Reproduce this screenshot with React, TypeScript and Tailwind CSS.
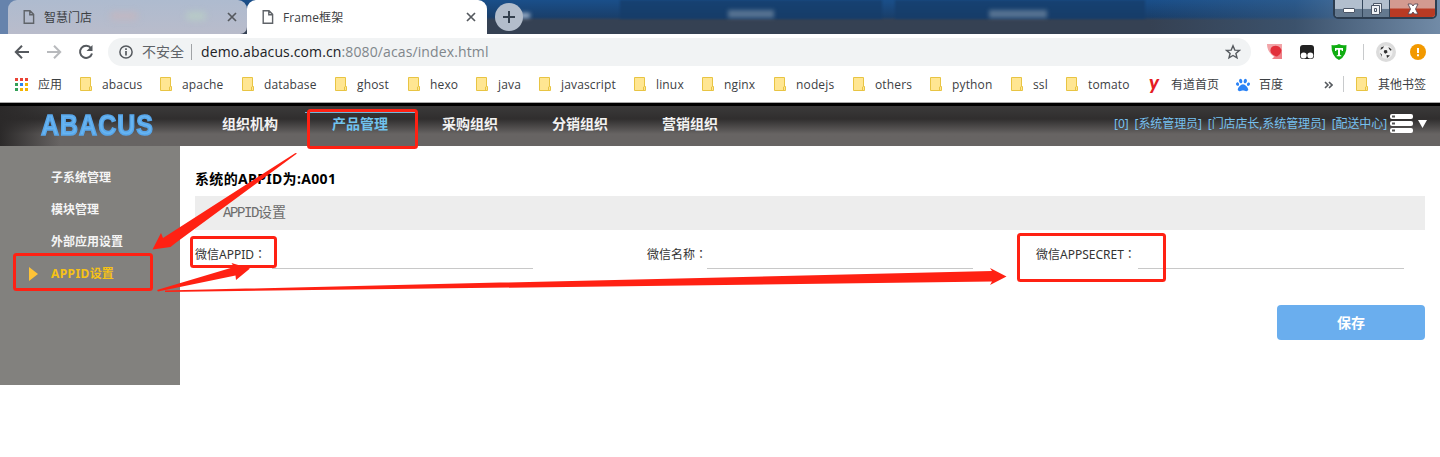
import React from "react";
import { FaPaw } from "react-icons/fa";

const UI = "font-['Open_Sans','Noto_Sans_CJK_SC',sans-serif]";

function PageIcon() {
  return (
    <svg width="12" height="14" viewBox="0 0 12 14" fill="none" stroke="#5f6368" strokeWidth="1.4" className="shrink-0">
      <path d="M1.2 .8H7L10.6 4.4V13.2H1.2Z M6.8 1V4.7H10.4" />
    </svg>
  );
}

function TabClose() {
  return (
    <svg width="10" height="10" viewBox="0 0 10 10" stroke="#55595e" strokeWidth="1.7" className="shrink-0">
      <path d="M1 1L9 9M9 1L1 9" />
    </svg>
  );
}

function Folder() {
  return (
    <svg width="13" height="15" viewBox="0 0 13 15" className="shrink-0">
      <path d="M.5 .5H10.5V9.500H11.500V13.500H.5Z" fill="#ffe692" stroke="#e8c443" />
      <path d="M9.500 13.500V10L10.500 9.500" fill="none" stroke="#e8c443" />
    </svg>
  );
}

function TabStrip() {
  return (
    <div className="relative h-[34px] w-full bg-linear-to-b from-[#1a4f8a] from-0% via-[#193f6b] via-50% to-[#354153] to-60% overflow-hidden">
      <div className="absolute left-0 top-0 h-[34px] w-[30px] bg-[#6683ac]" />
      <div className="absolute right-0 top-0 h-[34px] w-[290px] bg-linear-to-r from-transparent via-[#456b91]/40 to-[#7893b0]/90" />
      <div className="absolute left-[620px] top-0 h-[19px] w-[262px] bg-[#153c68]/70 blur-[1px]" />
      <div className="absolute left-[895px] top-0 h-[19px] w-[250px] bg-[#153c68]/70 blur-[1px]" />
      <div className="absolute left-[728px] top-[10px] h-[8px] w-[46px] bg-[#8296ab]/60 blur-[2px]" />
      <div className="absolute left-[989px] top-[10px] h-[8px] w-[58px] bg-[#8296ab]/60 blur-[2px]" />
      <div className="absolute left-[515px] top-[13px] h-[5px] w-[15px] bg-[#c3d0e0]/80 blur-[2px]" />
      <div className="relative flex h-full">
        <div className="relative ml-[8px] flex h-[34px] w-[239px] items-center rounded-t-[9px] rounded-br-[7px] bg-linear-to-b from-[#aebbcf] to-[#b9bccb] pl-[15px] pr-[10px]">
          <div className="absolute left-[178px] top-[12px] h-[8px] w-[20px] rounded-full bg-[#b9cfc6]/80 blur-[3px]" />
          <div className="absolute left-[102px] top-[12px] h-[8px] w-[28px] rounded-full bg-[#c4b6bf]/80 blur-[3px]" />
          <PageIcon />
          <span className="ml-[9px] grow pt-px text-[12px] leading-none text-[#3c4043]">智慧门店</span>
          <TabClose />
        </div>
        <div className="relative flex h-[34px] w-[240px] items-center rounded-t-[9px] bg-white pl-[15px] pr-[11px]">
          <PageIcon />
          <span className="ml-[9px] grow pt-px text-[12px] leading-none tracking-[0.1px] text-[#3c4043]">Frame框架</span>
          <TabClose />
        </div>
        <div className="ml-[8px] mt-[3px] flex size-[28px] items-center justify-center rounded-full bg-[#b3bdcb]">
          <svg width="14" height="14" viewBox="0 0 14 14" stroke="#34404e" strokeWidth="2">
            <path d="M7 1V13M1 7H13" />
          </svg>
        </div>
      </div>
      <div className="absolute right-[3px] top-[-4px] flex h-[23px] w-[104px] overflow-hidden rounded-b-[5px] border-2 border-[#2c3d50] ring-1 ring-inset ring-white/60">
        <div className="flex w-[28px] items-end justify-center border-r border-[#33465b] bg-linear-to-b from-[#b2bfce] from-55% to-[#64798f] to-60% pb-[4px]">
          <div className="h-[5px] w-[12px] rounded-[1px] border border-[#4b5667] bg-white" />
        </div>
        <div className="flex w-[27px] items-center justify-center border-r border-[#33465b] bg-linear-to-b from-[#b2bfce] from-55% to-[#64798f] to-60% pt-[3px]">
          <svg width="13" height="13" viewBox="0 0 13 13" fill="#eef1f5" stroke="#4b5667">
            <path d="M3.5 .5H11.5V9.5H3.5Z" />
            <path d="M1.5 2.5H9.5V11.5H1.5Z M4.5 5.5H6.5V8.5H4.5Z" fillRule="evenodd" />
          </svg>
        </div>
        <div className="flex grow items-center justify-center bg-linear-to-b from-[#d39a90] from-50% to-[#b83a24] to-60% pt-[3px]">
          <svg width="14" height="12" viewBox="0 0 14 12">
            <path d="M2 1H5.500L7 3L8.500 1H12L9.500 6L12 11H8.500L7 9L5.500 11H2L4.500 6Z" fill="#fff" stroke="#5a4a58" strokeWidth=".9" />
          </svg>
        </div>
      </div>
    </div>
  );
}

function Toolbar() {
  return (
    <div className="flex h-[36px] items-center bg-white pl-[14px]">
      <svg width="16" height="14" viewBox="0 0 16 14" fill="none" stroke="#55595e" strokeWidth="2">
        <path d="M15 7H2M8 .8L1.8 7L8 13.2" />
      </svg>
      <svg width="16" height="14" viewBox="0 0 16 14" fill="none" stroke="#b8babd" strokeWidth="2" className="ml-[16px]">
        <path d="M1 7H14M8 .8L14.2 7L8 13.2" />
      </svg>
      <svg width="16" height="16" viewBox="0 0 16 16" fill="none" stroke="#55595e" strokeWidth="2" className="ml-[16px]">
        <path d="M13 4.1A6.1 6.1 0 1 0 14 9.5" />
        <path d="M14.5 1V7H8.5Z" fill="#55595e" stroke="none" />
      </svg>
      <div className="ml-[14px] flex h-[28px] w-[1143px] items-center rounded-full bg-[#f1f3f4] pl-[11px] pr-[10px]">
        <svg width="14" height="14" viewBox="0 0 14 14" fill="none" stroke="#55595e" strokeWidth="1.5">
          <circle cx="7" cy="7" r="6.1" />
          <path d="M7 6V10.4M7 3.3V4.9" strokeWidth="1.7" />
        </svg>
        <span className="ml-[9px] w-[43px] whitespace-nowrap text-[14px] leading-none text-[#5f6368]">不安全</span>
        <div className="ml-[6px] h-[16px] w-px bg-[#a0a3a6]" />
        <span className="ml-[9px] grow whitespace-nowrap text-[14px] leading-none tracking-[0.12px] text-[#202124]">
          demo.abacus.com.cn<span className="text-[#80868b]">:8080/acas/index.html</span>
        </span>
        <svg width="16" height="16" viewBox="0 0 16 16" fill="none" stroke="#55595e" strokeWidth="1.4">
          <path d="M8 1.8L9.8 6.1L14.4 6.4L10.9 9.4L12 13.9L8 11.5L4 13.9L5.1 9.4L1.6 6.4L6.2 6.1Z" />
        </svg>
      </div>
      <svg width="16" height="16" viewBox="0 0 16 16" className="ml-[16px]">
        <path d="M0 0H15V15A15 15 0 0 1 0 0" fill="#f2a4a8" />
        <path d="M15 5V15H5Z" fill="#ee7f86" />
        <path d="M4 4C6 1 12 1 14 5C15 8 13 11 10 12.500C6 12 2 9 4 4Z" fill="#e22f3a" />
      </svg>
      <svg width="16" height="16" viewBox="0 0 16 16" className="ml-[16px]">
        <rect x="1" y="1" width="14" height="14" rx="3" fill="#222" />
        <circle cx="4.7" cy="11.5" r="3" fill="#fff" />
        <circle cx="11.3" cy="11.5" r="3" fill="#fff" />
      </svg>
      <svg width="16" height="16" viewBox="0 0 16 16" className="ml-[16px]">
        <path d="M8 0Q11 2 15.5 1Q16 12 8 16Q0 12 .5 1Q5 2 8 0" fill="#10ad12" />
        <path d="M4 4H12V7H10.8L10.5 5.8H9V11L10.3 11.5V12.3H5.7V11.5L7 11V5.8H5.5L5.2 7H4Z" fill="#fff" />
      </svg>
      <div className="ml-[16px] h-[16px] w-px bg-[#c8cacc]" />
      <svg width="20" height="20" viewBox="0 0 20 20" className="ml-[12px]">
        <circle cx="10" cy="10" r="10" fill="#dcdcdc" />
        <circle cx="10" cy="10" r="6.6" fill="#f1f1f1" />
        <path d="M8.5 8L11 8.3L11.5 10.5L9.2 11.7L7.7 10Z M5 5.5L8 4.2L7 6.2L4.5 8Z M12.5 5L15.5 7.2L15 9L13 7Z M4 11L5.7 12.2L6 15Z M10.5 13L14 13.5L11 16Z" fill="#303030" />
      </svg>
      <svg width="16" height="16" viewBox="0 0 16 16" className="ml-[14px]">
        <circle cx="8" cy="8" r="8" fill="#f29900" />
        <path d="M8 4V9M8 10.3V12.2" stroke="#fff" strokeWidth="2" />
      </svg>
    </div>
  );
}

const folders = [
  { name: "abacus", slot: "w-[80px]" },
  { name: "apache", slot: "w-[82px]" },
  { name: "database", slot: "w-[93px]" },
  { name: "ghost", slot: "w-[73px]" },
  { name: "hexo", slot: "w-[68px]" },
  { name: "java", slot: "w-[63px]" },
  { name: "javascript", slot: "w-[95px]" },
  { name: "linux", slot: "w-[68px]" },
  { name: "nginx", slot: "w-[72px]" },
  { name: "nodejs", slot: "w-[79px]" },
  { name: "others", slot: "w-[77px]" },
  { name: "python", slot: "w-[81px]" },
  { name: "ssl", slot: "w-[55px]" },
  { name: "tomato", slot: "w-[83px]" },
];

const appDots = [
  "bg-[#ea4335]", "bg-[#ea4335]", "bg-[#ea4335]",
  "bg-[#34a058]", "bg-[#2b83ee]", "bg-[#f4b400]",
  "bg-[#34a058]", "bg-[#f4b400]", "bg-[#f4b400]",
];

function Bookmarks() {
  return (
    <div className="flex h-[32px] items-center bg-white pb-[3px] pl-[15px] text-[12px] leading-none text-[#3c4043]">
      <div className="mt-[-1px] grid grid-cols-3 gap-[2px]">
        {appDots.map((c, i) => (
          <div key={i} className={"size-[3px] " + c} />
        ))}
      </div>
      <span className="ml-[10px] w-[42px] shrink-0 whitespace-nowrap pt-px">应用</span>
      {folders.map((f) => (
        <div key={f.name} className={"flex shrink-0 items-center whitespace-nowrap " + f.slot}>
          <Folder />
          <span className="ml-[9px] pt-px tracking-[0.15px]">{f.name}</span>
        </div>
      ))}
      <span className="mt-[-5px] w-[22px] shrink-0 font-['Lato',sans-serif] text-[20px] font-black italic leading-[14px] text-[#e51c23]">y</span>
      <span className="w-[65px] shrink-0 whitespace-nowrap pt-px">有道首页</span>
      <FaPaw size={14} color="#2b83f6" className="shrink-0" />
      <span className="ml-[9px] w-[65px] shrink-0 whitespace-nowrap pt-px">百度</span>
      <svg width="9" height="8" viewBox="0 0 9 8" fill="none" stroke="#55595e" strokeWidth="1.6" className="shrink-0">
        <path d="M1 1L4 4L1 7M5 1L8 4L5 7" />
      </svg>
      <div className="ml-[10px] mr-[12px] mt-[-1px] h-[16px] w-px shrink-0 bg-[#c8cacc]" />
      <Folder />
      <span className="ml-[9px] whitespace-nowrap pt-px">其他书签</span>
    </div>
  );
}

const menus = ["组织机构", "产品管理", "采购组织", "分销组织", "营销组织"];

function Header() {
  return (
    <header className="relative flex h-[43px] border-t-[3px] border-black bg-linear-to-b from-[#3b3a3a] from-0% via-[#302e2e] via-32% to-[#676463] to-70% font-['Noto_Sans','Noto_Sans_CJK_SC',sans-serif]">
      <div className="absolute left-0 top-0 h-[40px] w-[60px] bg-linear-to-r from-[#2b2929] to-transparent" />
      <div className="relative w-[195px] pl-[41px] pt-[3px]">
        <span className="block origin-left scale-x-[0.83] whitespace-nowrap font-['Liberation_Sans',sans-serif] text-[30px] font-bold leading-[32px] tracking-[1.3px] text-[#67b4f0] [-webkit-text-stroke:1.6px_#58a6ea]">ABACUS</span>
      </div>
      {menus.map((m) => (
        <div key={m} className={"relative flex h-[35px] w-[110px] items-center justify-center text-[14px] font-bold leading-none " + (m === "产品管理" ? "text-[#70c3ee]" : "text-[#f2f2f2]")}>
          {m === "产品管理" && <div className="absolute inset-x-0 top-[6px] h-px bg-[#70b8dc]" />}
          {m}
        </div>
      ))}
      <div className="ml-auto flex h-[36px] items-center gap-[6px] pr-[13px] text-[12px] leading-none tracking-[-0.1px] text-[#77c1f0]">
        <span>[0]</span>
        <span>[系统管理员]</span>
        <span>[门店店长,系统管理员]</span>
        <span>[配送中心]</span>
        <svg width="23" height="20" viewBox="0 0 23 20" className="ml-[-3px]">
          <rect width="23" height="5" rx="2" fill="#fff" />
          <rect y="7" width="23" height="5" rx="2" fill="#fff" />
          <rect y="14" width="23" height="5" rx="2" fill="#fff" />
          <path d="M2 2.5H5M2 9.5H5M2 16.5H5" stroke="#555" strokeWidth="2" />
        </svg>
        <svg width="9" height="8" viewBox="0 0 9 8" className="ml-[-1px]">
          <path d="M0 0H9L4.5 8Z" fill="#fff" />
        </svg>
      </div>
    </header>
  );
}

function Sidebar() {
  return (
    <aside className="h-[239px] w-[180px] shrink-0 bg-[#82817e] pt-[16px] text-[12px] font-bold leading-[32px] text-[#f4f4f4]">
      {["子系统管理", "模块管理", "外部应用设置"].map((s) => (
        <div key={s} className="h-[32px] pl-[51px]">{s}</div>
      ))}
      <div className="flex h-[32px] items-center pl-[29px] text-[#f6c216]">
        <svg width="9" height="14" viewBox="0 0 9 14"><path d="M0 0L9 7L0 14Z" fill="#fec337" /></svg>
        <span className="ml-[13px]"><span className="tracking-[0.4px]">APPID</span>设置</span>
      </div>
    </aside>
  );
}

function Field({ label, slot, line }: { label: string; slot: string; line: string }) {
  return (
    <label className={"flex h-[31px] shrink-0 " + slot}>
      <span className="whitespace-nowrap text-[12px] leading-[31px]">
        {label}
        <span className="font-['Noto_Sans_CJK_TC',sans-serif]" lang="zh-TW">：</span>
      </span>
      <input className={"ml-auto border-b border-[#c8c8c8] outline-none " + line} />
    </label>
  );
}

function Annotations() {
  return (
    <svg width="1440" height="457" viewBox="0 0 1440 457" className="pointer-events-none absolute left-0 top-0">
      <g fill="none" stroke="#ff2113" strokeWidth="3">
        <rect x="308.5" y="110.5" width="108" height="37" rx="2" />
        <rect x="14.5" y="254.5" width="137" height="35" rx="2" />
        <rect x="191.5" y="237.5" width="84" height="29" rx="2" />
        <rect x="1018.5" y="234.5" width="146" height="46" rx="2" />
      </g>
      <g fill="#ff2113">
        <path d="M297 153.500L175.5 243L170.5 247L152.500 249.500L161 233L163 238L295.500 153Z" />
        <path d="M157 290L234 267L231.500 263L250 268.500L236 280L235.500 275.500L158 291.500Z" />
        <path d="M165 290.500L992 271L990 268L1006.500 276.500L990 285L992 281.500L165 292Z" />
      </g>
    </svg>
  );
}

export default function App() {
  return (
    <div className={"relative h-[457px] w-[1440px] overflow-hidden bg-white " + UI}>
      <TabStrip />
      <Toolbar />
      <Bookmarks />
      <div className="h-px bg-[#a8a8a8]" />
      <Header />
      <div className="flex font-['Noto_Sans','Noto_Sans_CJK_SC',sans-serif]">
        <Sidebar />
        <main className="w-[1245px] pl-[15px] pt-[24px]">
          <h1 className="h-[26px] text-[14px] font-bold leading-[18px] tracking-[0.35px] text-black">系统的APPID为:A001</h1>
          <div className="h-[34px] bg-[#ededed] pl-[28px] font-['Liberation_Mono','Noto_Sans_CJK_SC',monospace] text-[14px] leading-[34px] text-[#6c6c6c]"><span className="tracking-[-1.4px]">APPID</span>设置</div>
          <div className="flex h-[75px] pt-[8px] text-[#333]">
            <Field label="微信APPID" slot="w-[338px]" line="w-[261px]" />
            <div className="w-[114px] shrink-0" />
            <Field label="微信名称" slot="w-[326px]" line="w-[266px]" />
            <div className="w-[63px] shrink-0" />
            <Field label="微信APPSECRET" slot="w-[368px]" line="w-[266px]" />
          </div>
          <button className="ml-auto block h-[35px] w-[148px] rounded-[4px] bg-[#6aaeee] text-[14px] font-bold leading-[34px] text-white">保存</button>
        </main>
      </div>
      <Annotations />
    </div>
  );
}
